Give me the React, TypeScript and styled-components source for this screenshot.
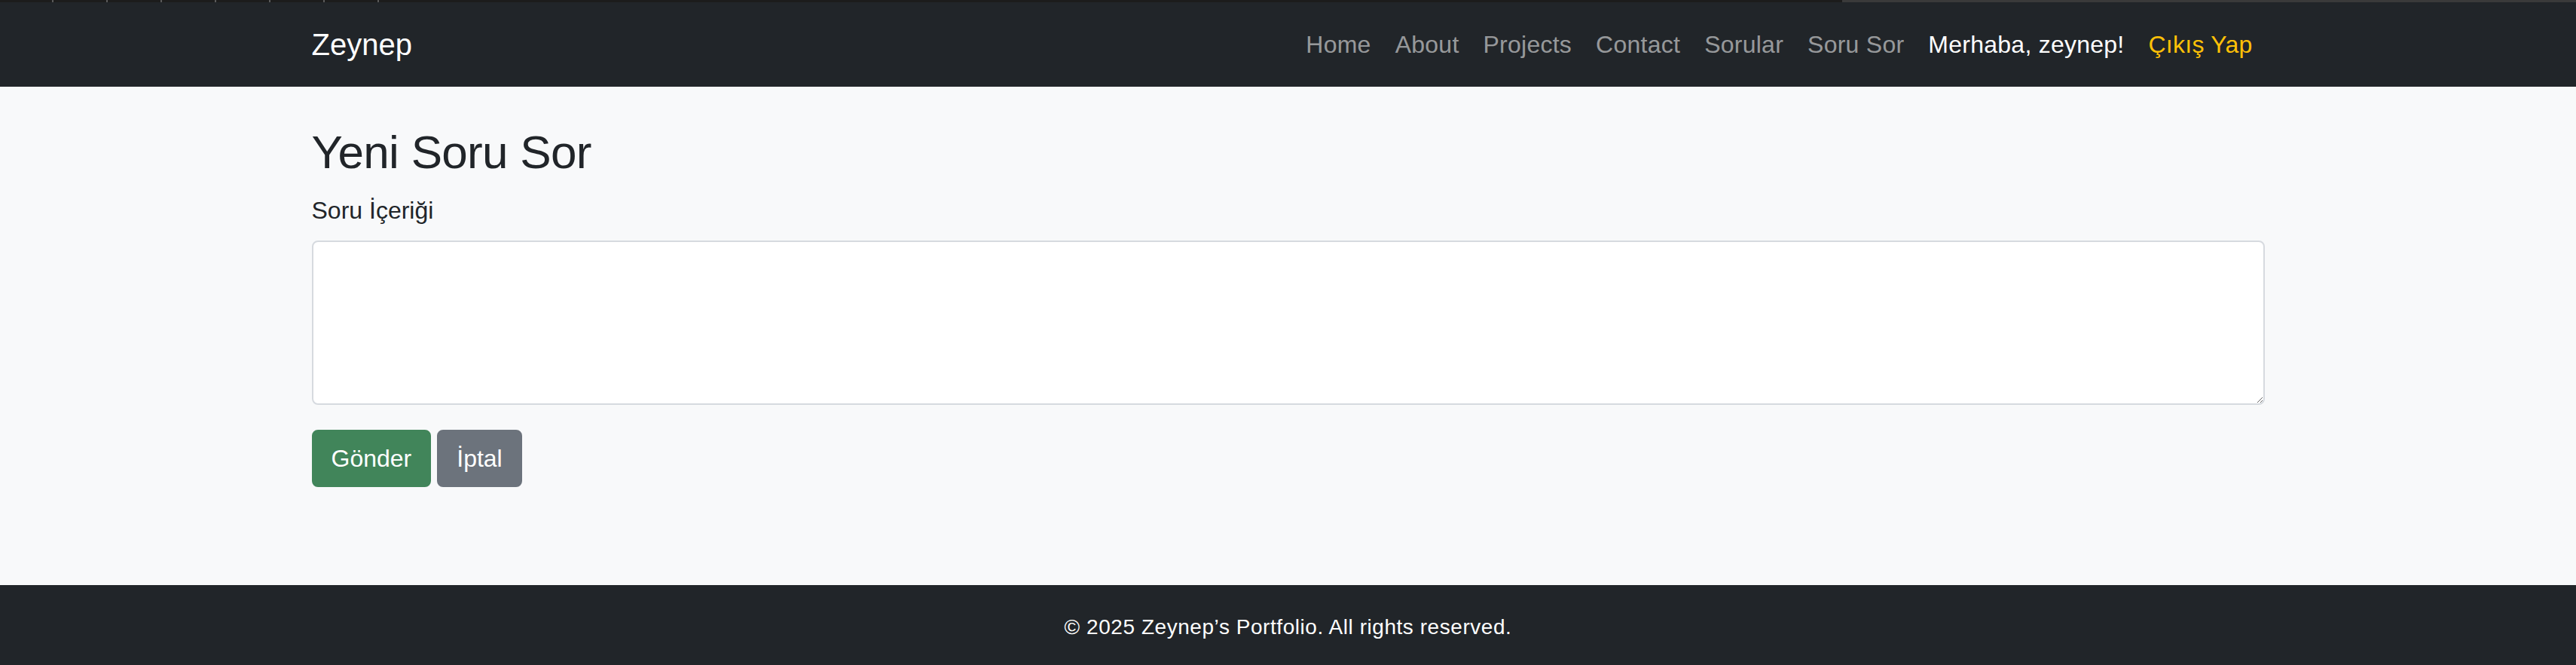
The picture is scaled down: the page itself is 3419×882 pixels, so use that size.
import React from "react";
import styled, { createGlobalStyle } from "styled-components";

const GlobalStyle = createGlobalStyle`
  html, body { margin: 0; padding: 0; }
  body {
    background: #f8f9fa;
    font-family: "Liberation Sans", Arial, sans-serif;
    color: #212529;
  }
  * { box-sizing: border-box; }
`;

const Page = styled.div`
  min-height: 100vh;
  display: flex;
  flex-direction: column;
`;

const TopStrip = styled.div`
  height: 3px;
  background:
    linear-gradient(to right, transparent 0, transparent 2445px, #3a3a3a 2445px),
    repeating-linear-gradient(to right, #1c1c1c 0, #1c1c1c 69px, #5a5a5a 69px, #5a5a5a 71px, #1c1c1c 71px, #1c1c1c 72px);
  background-size: 100% 100%, 504px 100%;
  background-repeat: no-repeat, no-repeat;
  background-color: #1c1c1c;
`;

const Navbar = styled.nav`
  background: #212529;
  padding: 16px 0;
`;

const Container = styled.div`
  width: 100%;
  max-width: 2640px;
  margin: 0 auto;
  padding: 0 24px;
`;

const NavInner = styled(Container)`
  display: flex;
  align-items: center;
`;

const Brand = styled.a`
  font-size: 40px;
  line-height: 60px;
  padding: 10px 0;
  margin-right: 32px;
  color: #fff;
  text-decoration: none;
`;

const NavList = styled.ul`
  display: flex;
  align-items: center;
  list-style: none;
  margin: 0 0 0 auto;
  padding: 0;
`;

const NavItem = styled.li<{ $tone?: "muted" | "light" | "warning" }>`
  font-size: 32px;
  line-height: 48px;
  letter-spacing: 0.25px;
  padding: 16px 16px;
  color: ${(p) =>
    p.$tone === "light" ? "#ffffff" : p.$tone === "warning" ? "#ffc107" : "rgba(255,255,255,0.55)"};
  white-space: nowrap;
`;

const Main = styled(Container)`
  margin-top: 50px;
`;

const Title = styled.h2`
  font-size: 62px;
  font-weight: 500;
  letter-spacing: -0.7px;
  line-height: 1.2;
  margin: 0 0 16px;
  color: #212529;
`;

const Label = styled.label`
  display: block;
  font-size: 32px;
  line-height: 48px;
  margin-bottom: 16px;
`;

const TextArea = styled.textarea`
  display: block;
  width: 100%;
  height: 218px;
  background: #fff;
  border: 2px solid #d6dadf;
  border-radius: 8px;
  padding: 12px 24px;
  font-size: 32px;
  line-height: 48px;
  font-family: inherit;
  outline: none;
`;

const Actions = styled.div`
  display: flex;
  gap: 8px;
  margin-top: 33px;
`;

const Button = styled.button<{ $variant: "success" | "secondary" }>`
  font-family: inherit;
  font-size: 32px;
  line-height: 48px;
  padding: 12px 24px;
  border: 2px solid ${(p) => (p.$variant === "success" ? "#41855a" : "#6c737c")};
  background: ${(p) => (p.$variant === "success" ? "#41855a" : "#6c737c")};
  color: #fff;
  border-radius: 8px;
  cursor: pointer;
`;

const Footer = styled.footer`
  margin-top: auto;
  background: #212529;
  color: #fff;
  text-align: center;
  padding: 35px 0 29px;
  font-size: 28px;
  letter-spacing: 0.55px;
  line-height: 42px;
`;

export default function App() {
  return (
    <>
      <GlobalStyle />
      <Page>
        <TopStrip />
        <Navbar>
          <NavInner>
            <Brand href="#">Zeynep</Brand>
            <NavList>
              <NavItem>Home</NavItem>
              <NavItem>About</NavItem>
              <NavItem>Projects</NavItem>
              <NavItem>Contact</NavItem>
              <NavItem>Sorular</NavItem>
              <NavItem>Soru Sor</NavItem>
              <NavItem $tone="light">Merhaba, zeynep!</NavItem>
              <NavItem $tone="warning">Çıkış Yap</NavItem>
            </NavList>
          </NavInner>
        </Navbar>
        <Main>
          <Title>Yeni Soru Sor</Title>
          <Label htmlFor="soru">Soru İçeriği</Label>
          <TextArea id="soru" />
          <Actions>
            <Button $variant="success">Gönder</Button>
            <Button $variant="secondary">İptal</Button>
          </Actions>
        </Main>
        <Footer>© 2025 Zeynep’s Portfolio. All rights reserved.</Footer>
      </Page>
    </>
  );
}
